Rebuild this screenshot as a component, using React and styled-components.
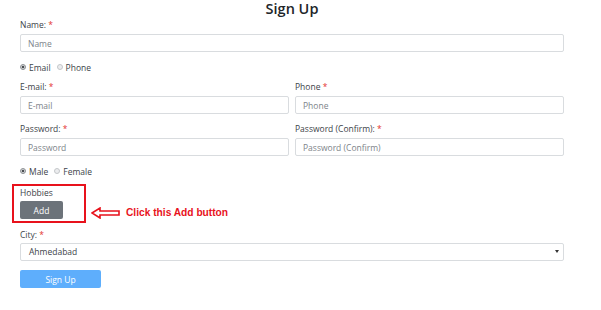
import React, { useState } from "react";
import styled, { createGlobalStyle } from "styled-components";

const GlobalStyle = createGlobalStyle`
  body {
    margin: 0;
    background: #ffffff;
    font-family: "Open Sans", "Noto Sans", sans-serif;
    color: #333a40;
  }
`;

const Page = styled.div`
  width: 544px;
  padding: 0 37px 0 20px;
`;

const Title = styled.h1`
  margin: 0;
  font-size: 14.5px;
  line-height: 18px;
  font-weight: 600;
  text-align: center;
  color: #212529;
`;

const Group = styled.div`
  margin-bottom: 8px;
`;

const Row = styled.div`
  display: grid;
  grid-template-columns: 1fr 1fr;
  gap: 6px;
  margin-bottom: 8px;
`;

const Label = styled.label`
  display: block;
  font-size: 8.5px;
  line-height: 12px;
  padding-top: 1px;
  margin-bottom: ${(p) => (p.tight ? 2 : 3)}px;
  color: #3d4349;
`;

const Star = styled.span`
  color: #e3342f;
`;

const Input = styled.input`
  display: block;
  width: 100%;
  height: 18px;
  box-sizing: border-box;
  border: 1px solid #d9dcdf;
  border-radius: 2px;
  padding: 0 7px;
  font-family: inherit;
  font-size: 8.5px;
  color: #495057;
  outline: none;
  &::placeholder {
    color: #7d848a;
  }
`;

const RadioRow = styled.div`
  display: flex;
  align-items: center;
  gap: 6px;
  height: 12px;
  padding-top: 1px;
  margin-bottom: 7px;
  font-size: 8.5px;
  color: #3d4349;
`;

const RadioLabel = styled.label`
  display: flex;
  align-items: center;
  gap: 3px;
`;

const Dot = styled.span`
  width: 4px;
  height: 4px;
  border-radius: 50%;
  border: 1px solid ${(p) => (p.checked ? "#8a8e92" : "#c4c7ca")};
  background: ${(p) =>
    p.checked
      ? "radial-gradient(circle, #4a4d50 0 1.3px, #d5d7d9 1.6px)"
      : "#ecedef"};
`;

const HobbyLine = styled.div`
  display: flex;
  align-items: flex-end;
  margin-top: 7px;
  margin-left: -8px;
`;

const HobbyBox = styled.div`
  width: 64px;
  border: 2px solid #e8121c;
  padding: 0 0 2px 6px;
`;

const GreyButton = styled.button`
  display: block;
  width: 43px;
  height: 18px;
  border: none;
  border-radius: 2px;
  background: #6c737a;
  color: #ffffff;
  font-family: inherit;
  font-size: 8.5px;
  padding: 0;
`;

const Note = styled.div`
  display: flex;
  align-items: center;
  gap: 5px;
  margin: 0 0 4px 5px;
  color: #e8121c;
  font-family: "Liberation Sans", Arial, sans-serif;
  font-weight: 700;
  font-size: 10.2px;
  line-height: 12px;
`;

const SelectBox = styled.div`
  position: relative;
  height: 18px;
  box-sizing: border-box;
  border: 1px solid #d9dcdf;
  border-radius: 2px;
  padding: 0 8px;
  font-size: 8.5px;
  line-height: 16px;
  color: #3d4349;
`;

const Caret = styled.span`
  position: absolute;
  right: 4px;
  top: 6px;
  width: 0;
  height: 0;
  border-left: 2px solid transparent;
  border-right: 2px solid transparent;
  border-top: 3px solid #333;
`;

const SubmitButton = styled.button`
  display: block;
  margin-top: 9px;
  width: 81px;
  height: 18px;
  border: none;
  border-radius: 2px;
  background: #5eaefc;
  color: #ffffff;
  font-family: inherit;
  font-size: 8.5px;
  padding: 0;
`;

const Arrow = () => (
  <svg width="30" height="12" viewBox="0 0 30 12">
    <path
      d="M1 6 L9 1 L9 4 L28 4 L28 8 L9 8 L9 11 Z"
      fill="#fff"
      stroke="#e8121c"
      strokeWidth="1.6"
      strokeLinejoin="miter"
    />
  </svg>
);

const Field = ({ label, placeholder, type = "text" }) => (
  <div>
    <Label>
      {label} <Star>*</Star>
    </Label>
    <Input type={type} placeholder={placeholder} />
  </div>
);

const App = () => {
  const [contact, setContact] = useState("email");
  const [gender, setGender] = useState("male");

  return (
    <Page>
      <GlobalStyle />
      <Title>Sign Up</Title>
      <Group>
        <Field label="Name:" placeholder="Name" />
      </Group>
      <RadioRow>
        <RadioLabel onClick={() => setContact("email")}>
          <Dot checked={contact === "email"} /> Email
        </RadioLabel>
        <RadioLabel onClick={() => setContact("phone")}>
          <Dot checked={contact === "phone"} /> Phone
        </RadioLabel>
      </RadioRow>
      <Row>
        <Field label="E-mail:" placeholder="E-mail" />
        <Field label="Phone" placeholder="Phone" />
      </Row>
      <Row>
        <Field label="Password:" placeholder="Password" type="password" />
        <Field
          label="Password (Confirm):"
          placeholder="Password (Confirm)"
          type="password"
        />
      </Row>
      <RadioRow>
        <RadioLabel onClick={() => setGender("male")}>
          <Dot checked={gender === "male"} /> Male
        </RadioLabel>
        <RadioLabel onClick={() => setGender("female")}>
          <Dot checked={gender === "female"} /> Female
        </RadioLabel>
      </RadioRow>
      <HobbyLine>
        <HobbyBox>
          <Label tight>Hobbies</Label>
          <GreyButton>Add</GreyButton>
        </HobbyBox>
        <Note>
          <Arrow />
          Click this Add button
        </Note>
      </HobbyLine>
      <Group style={{ marginTop: 5 }}>
        <Label tight>
          City: <Star>*</Star>
        </Label>
        <SelectBox>
          Ahmedabad
          <Caret />
        </SelectBox>
      </Group>
      <SubmitButton>Sign Up</SubmitButton>
    </Page>
  );
};

export default App;
